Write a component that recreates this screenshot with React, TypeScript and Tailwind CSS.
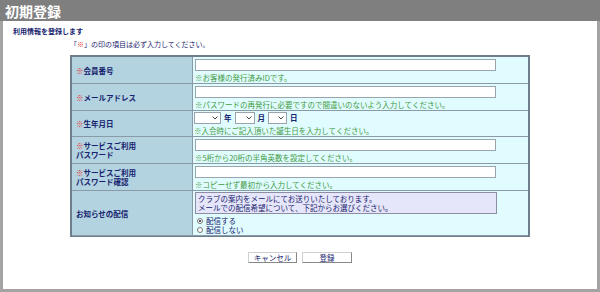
import React from 'react';

const jp = { fontFamily: '"Noto Sans CJK JP", "Noto Sans", sans-serif' };

function Label({ req, lines }: { req?: boolean; lines: string[] }) {
  return (
    <div className="bg-[#b3d3e0] border-r border-b border-[#8a9aa8] flex items-center pl-[4px]">
      <div className="text-[7.5px] leading-[9px] font-bold text-[#16226e]">
        {lines.map((l, i) => (
          <div key={i}>
            {i === 0 && req && <span className="text-[#e8302a]">※</span>}
            {l}
          </div>
        ))}
      </div>
    </div>
  );
}

function Hint({ children }: { children: React.ReactNode }) {
  return <div className="text-[7.5px] leading-[9px] text-[#3f9a3f] mt-[2px]">{children}</div>;
}

function TextBox() {
  return <div className="w-[301px] h-[12px] bg-white border border-[#9aa4ac]" />;
}

function Select({ w }: { w: string }) {
  return (
    <div className={`${w} h-[12px] bg-white border border-[#9aa4ac] flex items-center justify-end pr-[2px]`}>
      <svg width="6" height="4" viewBox="0 0 6 4">
        <path d="M0.5 0.5 L3 3 L5.5 0.5" fill="none" stroke="#444" strokeWidth="1" />
      </svg>
    </div>
  );
}

function Radio({ checked }: { checked?: boolean }) {
  return (
    <span className="inline-flex w-[6px] h-[6px] rounded-full border border-[#777] bg-white items-center justify-center mr-[3px]">
      {checked && <span className="w-[2px] h-[2px] rounded-full bg-[#222]" />}
    </span>
  );
}

export default function App() {
  return (
    <div className="w-[600px] h-[292px] bg-white flex flex-col" style={jp}>
      {/* ヘッダー */}
      <div className="h-[21px] bg-[#7f7f7f] flex items-center pl-[5px]">
        <span className="text-white font-bold text-[14px] leading-none">初期登録</span>
      </div>

      <div className="flex-1 border-x-[3px] border-b-[3px] border-[#a3a3a3] flex flex-col">
        <div className="pl-[10px] pt-[6px] text-[7px] leading-[9px] font-bold text-[#16226e]">利用情報を登録します</div>
        <div className="pl-[67px] pt-[4px] text-[7px] leading-[9px] text-[#16226e]">
          「<span className="text-[#e8302a]">※</span>」の印の項目は必ず入力してください。
        </div>

        {/* フォーム */}
        <div className="mx-auto mt-[6px] w-[460px] border-2 border-b-[1px] border-[#6f7e8c] grid grid-cols-[121px_1fr]">
          <Label req lines={['会員番号']} />
          <div className="h-[27px] bg-[#e1fcfe] border-b border-[#8a9aa8] pl-[2px] pt-[2px]">
            <TextBox />
            <Hint>※お客様の発行済みIDです。</Hint>
          </div>

          <Label req lines={['メールアドレス']} />
          <div className="h-[27px] bg-[#e1fcfe] border-b border-[#8a9aa8] pl-[2px] pt-[2px]">
            <TextBox />
            <Hint>※パスワードの再発行に必要ですので間違いのないよう入力してください。</Hint>
          </div>

          <Label req lines={['生年月日']} />
          <div className="h-[26px] bg-[#e1fcfe] border-b border-[#8a9aa8] pl-[1px] pt-[1px]">
            <div className="flex items-center text-[7.5px] font-bold text-[#16226e]">
              <Select w="w-[27px]" />
              <span className="mx-[3px]">年</span>
              <Select w="w-[20px]" />
              <span className="mx-[3px]">月</span>
              <Select w="w-[19px]" />
              <span className="mx-[3px]">日</span>
            </div>
            <Hint>※入会時にご記入頂いた誕生日を入力してください。</Hint>
          </div>

          <Label req lines={['サービスご利用', 'パスワード']} />
          <div className="h-[27px] bg-[#e1fcfe] border-b border-[#8a9aa8] pl-[2px] pt-[2px]">
            <TextBox />
            <Hint>※5桁から20桁の半角英数を設定してください。</Hint>
          </div>

          <Label req lines={['サービスご利用', 'パスワード確認']} />
          <div className="h-[27px] bg-[#e1fcfe] border-b border-[#8a9aa8] pl-[2px] pt-[2px]">
            <TextBox />
            <Hint>※コピーせず最初から入力してください。</Hint>
          </div>

          <Label lines={['お知らせの配信']} />
          <div className="h-[45px] bg-[#e1fcfe] border-b border-[#8a9aa8] pl-[2px] pt-[1px]">
            <div className="w-[302px] h-[22px] bg-[#e6e6fa] border border-[#8d8da6] px-[2px] pt-[1px] text-[7.5px] leading-[9px] text-[#16226e]">
              <div>クラブの案内をメールにてお送りいたしております。</div>
              <div>メールでの配信希望について、下記からお選びください。</div>
            </div>
            <div className="mt-[2px] pl-[2px] text-[7.5px] leading-[9px] text-[#16226e]">
              <div className="flex items-center"><Radio checked />配信する</div>
              <div className="flex items-center"><Radio />配信しない</div>
            </div>
          </div>
        </div>

        {/* ボタン */}
        <div className="flex justify-center gap-[5px] mt-[15px]">
          <button className="w-[49px] h-[11px] bg-white border border-[#d0d0d0] border-r-[#888] border-b-[#888] text-[7.5px] leading-none text-[#16226e]">キャンセル</button>
          <button className="w-[50px] h-[11px] bg-white border border-[#d0d0d0] border-r-[#888] border-b-[#888] text-[7.5px] leading-none text-[#16226e]">登録</button>
        </div>
      </div>
    </div>
  );
}
